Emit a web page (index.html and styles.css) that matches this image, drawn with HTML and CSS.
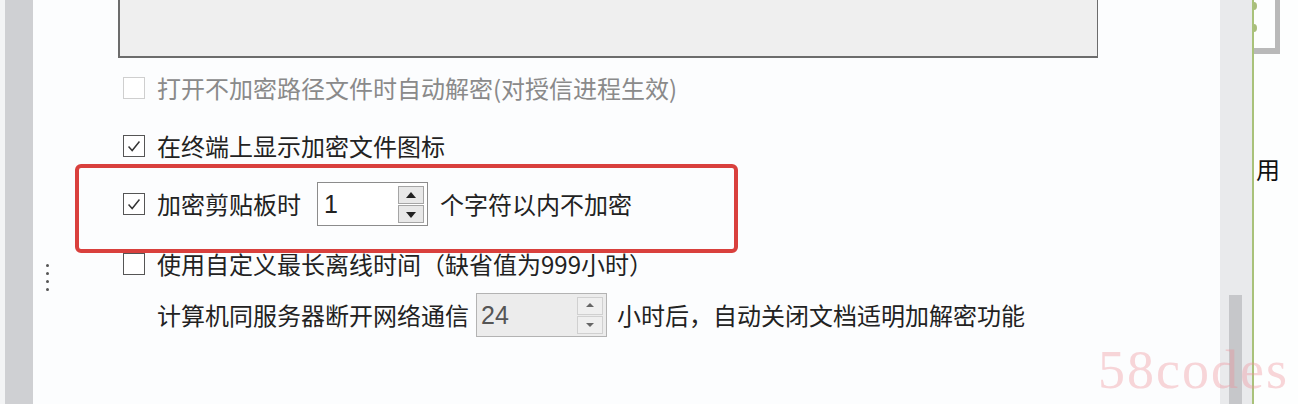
FILE: index.html
```html
<!DOCTYPE html>
<html lang="zh-CN">
<head>
  <meta charset="UTF-8" />
  <meta name="viewport" content="width=device-width, initial-scale=1.0"/>
  <title>加密选项</title>
  <link rel="stylesheet" href="styles.css">
</head>
<body>
  <div class="frame">
    <div class="edge"></div>
    <div class="strip"></div>

    <div class="panel">
      <div class="grip"><span></span><span></span><span></span><span></span></div>

      <div class="list-box"></div>

      <div class="options">
        <div class="row row-1">
          <span class="check disabled"></span>
          <span class="label muted">打开不加密路径文件时自动解密(对授信进程生效)</span>
        </div>

        <div class="row row-2">
          <span class="check checked">
            <svg viewBox="0 0 22 22"><polyline points="5,11.5 9,16 17,6" /></svg>
          </span>
          <span class="label">在终端上显示加密文件图标</span>
        </div>

        <div class="row row-3">
          <span class="check checked">
            <svg viewBox="0 0 22 22"><polyline points="5,11.5 9,16 17,6" /></svg>
          </span>
          <span class="label">加密剪贴板时</span>
          <div class="spinner">
            <span class="value">1</span>
            <div class="arrows">
              <span class="arrow up"></span>
              <span class="arrow down"></span>
            </div>
          </div>
          <span class="label">个字符以内不加密</span>
        </div>

        <div class="row row-4">
          <span class="check"></span>
          <span class="label">使用自定义最长离线时间（缺省值为999小时）</span>
        </div>

        <div class="row row-5">
          <span class="label">计算机同服务器断开网络通信</span>
          <div class="spinner off">
            <span class="value">24</span>
            <div class="arrows">
              <span class="arrow up"></span>
              <span class="arrow down"></span>
            </div>
          </div>
          <span class="label">小时后，自动关闭文档适明加解密功能</span>
        </div>
      </div>

      <!-- annotation drawn over the screenshot -->
      <div class="highlight"></div>
    </div>

    <div class="scrollbar"><div class="thumb"></div></div>
    <div class="divider"></div>

    <div class="side">
      <div class="bracket">
        <span class="dot dot-1"></span>
        <span class="dot dot-2"></span>
      </div>
      <div class="side-text">用</div>
    </div>

    <div class="watermark">58codes</div>
  </div>
</body>
</html>
```

FILE: styles.css
```css
html, body {
  margin: 0;
  padding: 0;
}

body {
  font-family: "Noto Sans CJK SC", "Noto Sans", sans-serif;
  background: #fcfdfe;
  color: #222;
}

.frame {
  position: relative;
  display: flex;
  width: 1298px;
  height: 404px;
  overflow: hidden;
}

.edge {
  width: 5px;
  background: #f3f4f5;
}

.strip {
  width: 28px;
  background: #cfd0d3;
}

.panel {
  position: relative;
  width: 1187px;
  background: #fcfdfe;
}

.grip {
  position: absolute;
  left: 13px;
  top: 264px;
  display: flex;
  flex-direction: column;
  gap: 5px;
}

.grip span {
  width: 3px;
  height: 3px;
  border-radius: 50%;
  background: #555;
}

.list-box {
  margin-left: 85px;
  width: 977px;
  height: 56px;
  background: #efefef;
  border: 1px solid #6c6c6c;
  border-top: none;
  border-width: 0 1px 2px 2px;
}

.options {
  padding-left: 90px;
}

.row {
  display: flex;
  align-items: center;
  font-size: 24px;
  line-height: 30px;
  white-space: nowrap;
}

.row-1 { margin-top: 15px; height: 30px; }
.row-2 { margin-top: 28px; height: 30px; }
.row-3 { margin-top: 21px; height: 44px; }
.row-4 { margin-top: 23px; height: 30px; }
.row-5 { margin-top: 14px; height: 44px; padding-left: 34px; }

.check {
  width: 20px;
  height: 20px;
  border: 1px solid #555;
  background: #fff;
  margin-right: 12px;
  flex: none;
}

.check.disabled {
  border-color: #cfcfcf;
}

.check svg {
  display: block;
  width: 20px;
  height: 20px;
}

.check polyline {
  fill: none;
  stroke: #333;
  stroke-width: 1.6;
}

.label {
  color: #222;
}

.label.muted {
  color: #8a8a8a;
}

.spinner {
  display: flex;
  align-items: center;
  justify-content: space-between;
  width: 109px;
  height: 42px;
  border: 1px solid #8c8c8c;
  background: #fff;
  margin: 0 12px 0 16px;
  flex: none;
}

.spinner .value {
  font-family: "Liberation Sans", Arial, sans-serif;
  font-size: 25px;
  padding-left: 6px;
  color: #222;
}

.arrows {
  display: flex;
  flex-direction: column;
  gap: 1px;
  margin-right: 3px;
}

.arrow {
  position: relative;
  width: 24px;
  height: 16px;
  border: 1px solid #a5a5a5;
  background: #e8e8e8;
}

.arrow::after {
  content: "";
  position: absolute;
  left: 7px;
  border-left: 5px solid transparent;
  border-right: 5px solid transparent;
}

.arrow.up::after {
  top: 5px;
  border-bottom: 6px solid #222;
}

.arrow.down::after {
  top: 6px;
  border-top: 6px solid #222;
}

.spinner.off {
  width: 129px;
  border-color: #b3b3b3;
  background: #ececec;
  margin: 0 10px 0 7px;
}

.spinner.off .value {
  color: #555;
  padding-left: 4px;
}

.spinner.off .arrow {
  border-color: #d0d0d0;
  background: #efefef;
}

.spinner.off .arrow.up::after {
  border-bottom-color: #666;
  border-left-width: 4px;
  border-right-width: 4px;
  border-bottom-width: 4px;
  left: 8px;
}

.spinner.off .arrow.down::after {
  border-top-color: #666;
  border-left-width: 4px;
  border-right-width: 4px;
  border-top-width: 4px;
  left: 8px;
}

.highlight {
  position: absolute;
  left: 42px;
  top: 164px;
  width: 655px;
  height: 81px;
  border: 4px solid #d9403d;
  border-radius: 6px;
}

.scrollbar {
  position: relative;
  width: 32px;
  background: #e9eaec;
}

.thumb {
  position: absolute;
  left: 9px;
  top: 295px;
  width: 13px;
  height: 120px;
  background: #c6c7ca;
}

.divider {
  width: 2px;
  background: #a9c27a;
}

.side {
  width: 44px;
  background: #fdfefe;
  overflow: hidden;
}

.bracket {
  position: relative;
  width: 21px;
  height: 48px;
  border-right: 5px solid #b9b9b9;
  border-bottom: 6px solid #b9b9b9;
}

.dot {
  position: absolute;
  left: -3px;
  width: 6px;
  height: 8px;
  border-radius: 50%;
  background: #a9bd7c;
}

.dot-1 { top: 2px; }
.dot-2 { top: 24px; }

.side-text {
  margin: 100px 0 0 2px;
  font-size: 24px;
  line-height: 30px;
  color: #111;
  white-space: nowrap;
}

.watermark {
  position: absolute;
  left: 1098px;
  top: 340px;
  font-family: "Liberation Serif", "Times New Roman", serif;
  font-size: 54px;
  line-height: 60px;
  letter-spacing: 2px;
  color: rgba(238, 140, 150, 0.36);
}
```
